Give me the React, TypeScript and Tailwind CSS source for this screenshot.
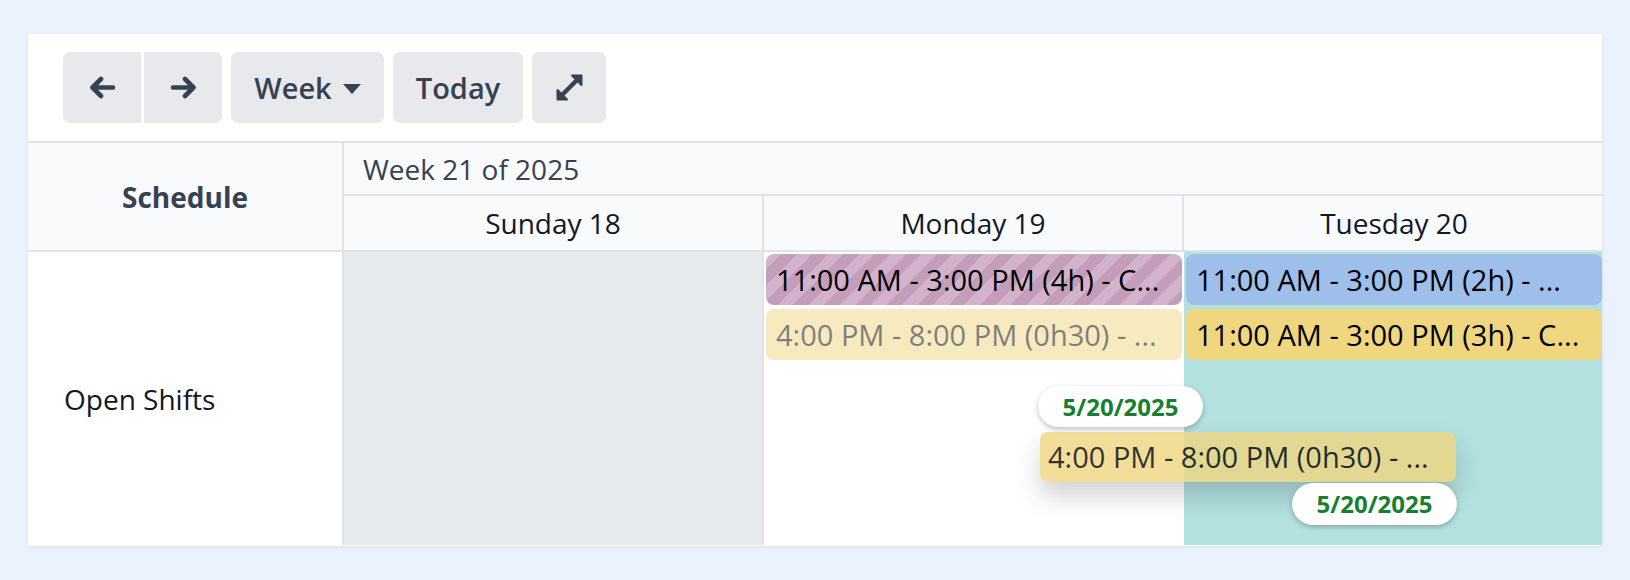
const font = "font-['Open_Sans',sans-serif]"

function ToolButton({ children, className = '' }: { children: React.ReactNode; className?: string }) {
  return (
    <button
      type="button"
      className={`flex h-[71px] items-center justify-center bg-[#e7e9ed] font-semibold text-[#374151] ${className}`}
    >
      {children}
    </button>
  )
}

function Arrow({ flip = false }: { flip?: boolean }) {
  return (
    <svg width="27" height="23" viewBox="0 0 27 23" className={flip ? 'scale-x-[-1]' : ''}>
      <path
        d="M12 3 L3.5 11.5 L12 20 M3.5 11.5 H24"
        fill="none"
        stroke="currentColor"
        strokeWidth="4.6"
        strokeLinecap="round"
        strokeLinejoin="round"
      />
    </svg>
  )
}

function ExpandIcon() {
  return (
    <svg width="27" height="27" viewBox="0 0 27 27">
      <path d="M7 20 L20 7" stroke="currentColor" strokeWidth="4.4" strokeLinecap="round" />
      <path
        d="M25.5 1.5 L25.5 11 L16 1.5 Z M1.5 25.5 L1.5 16 L11 25.5 Z"
        fill="currentColor"
        stroke="currentColor"
        strokeWidth="2"
        strokeLinejoin="round"
      />
    </svg>
  )
}

function Pill({
  text,
  className = '',
}: {
  text: string
  className?: string
}) {
  return (
    <div
      className={`mx-[2px] flex h-[51px] items-center overflow-hidden whitespace-nowrap rounded-[8px] pl-[10px] text-[29px] text-black ${className}`}
    >
      {text}
    </div>
  )
}

function DateBubble({ className = '' }: { className?: string }) {
  return (
    <div
      className={`absolute flex h-[41px] w-[165px] items-center justify-center rounded-full bg-white text-[24px] font-bold text-[#178030] shadow-[0_2px_5px_rgba(0,0,0,0.25)] ${className}`}
    >
      5/20/2025
    </div>
  )
}

export default function App() {
  return (
    <div className={`min-h-screen bg-[#eaf2fd] px-[28px] pt-[34px] ${font}`}>
      <div className="h-[512px] w-[1574px] overflow-hidden bg-white shadow-[0_1px_4px_rgba(0,0,0,0.08)]">
        {/* Toolbar */}
        <div className="flex h-[109px] items-center gap-[9px] border-b-2 border-[#dfe2e6] pl-[35px]">
          <div className="flex gap-[3px]">
            <ToolButton className="w-[78px] rounded-l-[7px]">
              <Arrow />
            </ToolButton>
            <ToolButton className="w-[78px] rounded-r-[7px]">
              <Arrow flip />
            </ToolButton>
          </div>
          <ToolButton className="w-[153px] gap-[11px] rounded-[7px] text-[29px]">
            <span>Week</span>
            <span className="mt-[2px] h-0 w-0 border-x-[9px] border-t-[10px] border-x-transparent border-t-[#374151]" />
          </ToolButton>
          <ToolButton className="w-[130px] rounded-[7px] text-[29px]">Today</ToolButton>
          <ToolButton className="w-[74px] rounded-[7px]">
            <ExpandIcon />
          </ToolButton>
        </div>

        {/* Header */}
        <div className="grid grid-cols-[316px_1260px] border-b-2 border-[#dfe2e6] bg-[#f9fafb]">
          <div className="flex items-center justify-center border-r-2 border-[#dfe2e6] text-[28px] font-bold text-[#374151]">
            Schedule
          </div>
          <div>
            <div className="flex h-[53px] items-center border-b-2 border-[#dfe2e6] pl-[19px] text-[28px] text-[#374151]">
              Week 21 of 2025
            </div>
            <div className="grid h-[54px] grid-cols-3 text-[28px] text-[#111827]">
              <div className="flex items-center justify-center border-r-2 border-[#dfe2e6]">Sunday 18</div>
              <div className="flex items-center justify-center border-r-2 border-[#dfe2e6]">Monday 19</div>
              <div className="flex items-center justify-center">Tuesday 20</div>
            </div>
          </div>
        </div>

        {/* Body */}
        <div className="relative grid h-[293px] grid-cols-[316px_420px_420px_420px]">
          <div className="flex items-center border-r-2 border-[#dfe2e6] pl-[36px] text-[28px] text-[#111827]">
            Open Shifts
          </div>
          <div className="border-r-2 border-[#dfe2e6] bg-[#e8ebee]" />
          <div className="flex flex-col gap-[4px] pt-[2px]">
            <Pill
              className="bg-[repeating-linear-gradient(135deg,#d3b3cb_0px,#d3b3cb_11px,#c49dba_11px,#c49dba_22px)]"
              text="11:00 AM - 3:00 PM (4h) - C..."
            />
            <Pill className="bg-[#f0d67f] opacity-50" text="4:00 PM - 8:00 PM (0h30) - ..." />
          </div>
          <div className="flex flex-col gap-[4px] bg-[#b2e1e0] pt-[2px]">
            <Pill className="bg-[#9dbfea]" text="11:00 AM - 3:00 PM (2h) - ..." />
            <Pill className="bg-[#f0d67f]" text="11:00 AM - 3:00 PM (3h) - C..." />
          </div>

          {/* drag preview */}
          <DateBubble className="left-[1010px] top-[134px]" />
          <div className="absolute left-[1012px] top-[180px] flex h-[50px] w-[416px] items-center rounded-[8px] bg-[#f0d67f] pl-[8px] text-[29px] text-black opacity-80 shadow-[0_14px_24px_rgba(0,0,0,0.22)]">
            4:00 PM - 8:00 PM (0h30) - ...
          </div>
          <DateBubble className="left-[1264px] top-[231px] h-[42px]" />
        </div>
      </div>
    </div>
  )
}
